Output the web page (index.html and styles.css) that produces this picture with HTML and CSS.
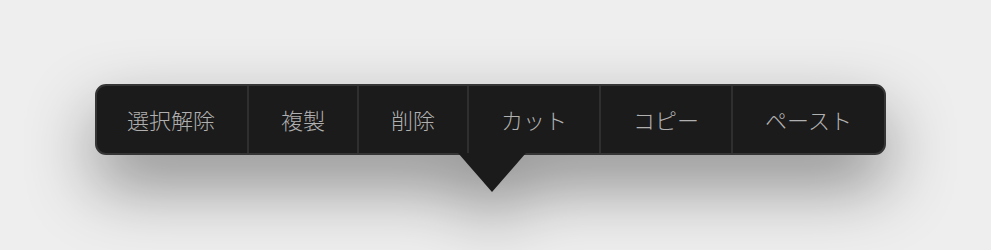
FILE: index.html
```html
<!DOCTYPE html>
<html lang="ja">
<head>
    <meta charset="UTF-8">
    <meta name="viewport" content="width=device-width, initial-scale=1.0">
    <title>Edit Menu</title>
    <link rel="stylesheet" href="styles.css">
</head>
<body>
    <div class="stage">
        <div class="popmenu">
            <div class="menubar">
                <span class="item">選択解除</span>
                <span class="item">複製</span>
                <span class="item">削除</span>
                <span class="item">カット</span>
                <span class="item">コピー</span>
                <span class="item">ペースト</span>
            </div>
            <div class="arrow"></div>
        </div>
    </div>
</body>
</html>
```

FILE: styles.css
```css
body{
    margin: 0;
    height: 250px;
    overflow: hidden;
    background: #eeeeee;
    font-family: "Noto Sans CJK JP", "Noto Sans", sans-serif;
}

.stage{
    padding-top: 84px;
    padding-left: 95px;
}

.popmenu{
    position: relative;
    display: inline-block;
    filter: drop-shadow(0 30px 34px rgba(0, 0, 0, 0.42));
}

.menubar{
    display: flex;
    height: 67px;
    background: #1b1b1b;
    border: 2px solid #353535;
    border-radius: 11px;
}

.item{
    display: flex;
    align-items: center;
    padding: 0 32px 2px;
    font-size: 22px;
    font-weight: 300;
    color: #b0b0b0;
    border-left: 2px solid #2f2f2f;
}

.item:first-child{
    border-left: none;
    padding-left: 30px;
}

.arrow{
    position: absolute;
    left: 363px;
    top: 69px;
    width: 0;
    height: 0;
    border-left: 34px solid transparent;
    border-right: 34px solid transparent;
    border-top: 39px solid #1b1b1b;
}
```
